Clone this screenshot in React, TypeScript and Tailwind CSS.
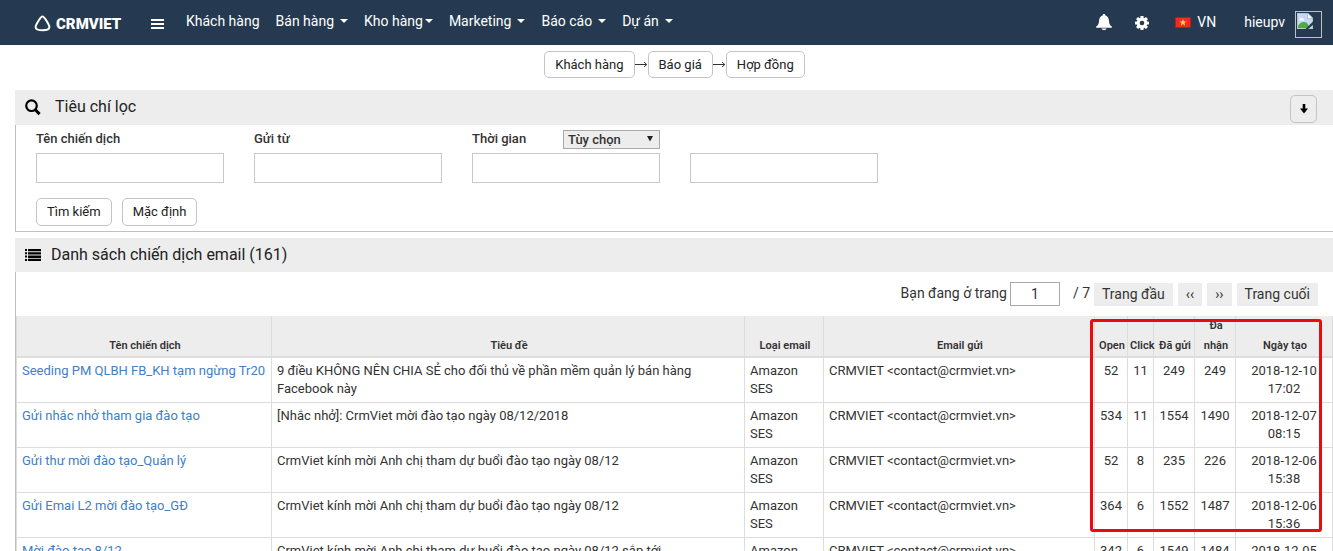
import React from "react";

const menu = [
  { name: "Khách hàng", caret: false },
  { name: "Bán hàng", caret: true },
  { name: "Kho hàng", caret: true, tight: true },
  { name: "Marketing", caret: true },
  { name: "Báo cáo", caret: true },
  { name: "Dự án", caret: true },
];

const steps = ["Khách hàng", "Báo giá", "Hợp đồng"];

const columns = [
  { name: "Tên chiến dịch", width: "w-[255px]" },
  { name: "Tiêu đề", width: "w-auto" },
  { name: "Loại email", width: "w-[79px]" },
  { name: "Email gửi", width: "w-[271px]" },
  { name: "Open", width: "w-[33px]" },
  { name: "Click", width: "w-[26px]" },
  { name: "Đã gửi", width: "w-[41px]" },
  { name: "Đã nhận", width: "w-[41px]" },
  { name: "Ngày tạo", width: "w-[97px]" },
];

const campaigns = [
  {
    name: "Seeding PM QLBH FB_KH tạm ngừng Tr20",
    title:
      "9 điều KHÔNG NÊN CHIA SẺ cho đối thủ về phần mềm quản lý bán hàng Facebook này",
    stats: [52, 11, 249, 249],
    created: "2018-12-10 17:02",
  },
  {
    name: "Gửi nhắc nhở tham gia đào tạo",
    title: "[Nhắc nhở]: CrmViet mời đào tạo ngày 08/12/2018",
    stats: [534, 11, 1554, 1490],
    created: "2018-12-07 08:15",
  },
  {
    name: "Gửi thư mời đào tạo_Quản lý",
    title: "CrmViet kính mời Anh chị tham dự buổi đào tạo ngày 08/12",
    stats: [52, 8, 235, 226],
    created: "2018-12-06 15:38",
  },
  {
    name: "Gửi Emai L2 mời đào tạo_GĐ",
    title: "CrmViet kính mời Anh chị tham dự buổi đào tạo ngày 08/12",
    stats: [364, 6, 1552, 1487],
    created: "2018-12-06 15:36",
  },
  {
    name: "Mời đào tạo 8/12",
    title:
      "CrmViet kính mời Anh chị tham dự buổi đào tạo ngày 08/12 sắp tới",
    stats: [342, 6, 1549, 1484],
    created: "2018-12-05 10:20",
  },
];

const Caret = () => (
  <svg width="8" height="4" viewBox="0 0 8 4" fill="currentColor">
    <path d="M0 0h8L4 4z" />
  </svg>
);

const Logo = () => (
  <a href="#" className="flex items-center gap-[5px] pt-[2px]" aria-label="CRMVIET">
    <svg width="17" height="17" viewBox="0 0 17 17" fill="none">
      <path
        d="M8.5 1.6C10.3 1.6 15.4 9.6 15.4 12.3C15.4 14.6 12 15.2 8.5 15.2C5 15.2 1.6 14.6 1.6 12.3C1.6 9.6 6.7 1.6 8.5 1.6Z"
        stroke="#fff"
        strokeWidth="2"
      />
    </svg>
    <span className="text-[15px] leading-5 font-black">CRMVIET</span>
  </a>
);

const Bell = () => (
  <svg width="16" height="17" viewBox="0 0 16 17" fill="currentColor">
    <path d="M8 0c.9 0 1.4.6 1.4 1.5C11.600 2.200 12.700 4 12.900 6.200C13.100 9.500 13.600 11 15.800 12.600V13.700H.200V12.600C2.400 11 2.900 9.500 3.100 6.200C3.300 4 4.400 2.200 6.600 1.500C6.600.6 7.100 0 8 0zM5.500 14.600h5C10 15.800 9 16.300 8 16.300S6 15.800 5.500 14.600z" />
  </svg>
);

const Gear = () => (
  <svg width="14" height="14" viewBox="0 0 14 14">
    <g fill="currentColor">
      <rect x="5.400" y="0" width="3.200" height="14" rx=".6" />
      <rect x="5.400" y="0" width="3.200" height="14" rx=".6" transform="rotate(45 7 7)" />
      <rect x="5.400" y="0" width="3.200" height="14" rx=".6" transform="rotate(90 7 7)" />
      <rect x="5.400" y="0" width="3.200" height="14" rx=".6" transform="rotate(135 7 7)" />
      <circle cx="7" cy="7" r="5.300" />
    </g>
    <circle cx="7" cy="7" r="2.300" fill="#253a50" />
  </svg>
);

const Flag = () => (
  <svg width="16" height="11" viewBox="0 0 16 11">
    <rect width="16" height="11" fill="#c5161c" />
    <rect x="1" y="1" width="14" height="9" fill="#ee2a2a" />
    <path
      d="M8 2l.9 2.500h2.600L9.400 6.100l.8 2.600L8 7.100 5.800 8.700l.8-2.600L4.500 4.500h2.600z"
      fill="#ffe042"
    />
  </svg>
);

const BrokenImage = () => (
  <svg width="16" height="16" viewBox="0 0 16 16">
    <path d="M0 0h11l5 5v11H0z" fill="#bfc6cc" />
    <path d="M1 1h9.500L15 5.500V15H1z" fill="#c3d9f7" />
    <path d="M10.500 0v5.500H16z" fill="#fff" stroke="#9aa3ab" strokeWidth=".6" />
    <path d="M2.500 6.500c0-2 2.500-2.500 3-1 1.500-.3 2 1 1.500 2H3c-.4 0-.5-.5-.5-1z" fill="#fff" />
    <path d="M1 15v-2c2-4 6-5 9-3l3 5z" fill="#53a93f" />
    <path d="M16 8.500L8.500 16H11l5-4z" fill="#253a50" />
  </svg>
);

const SearchIcon = () => (
  <svg width="16" height="17" viewBox="0 0 16 17" fill="none" stroke="#000">
    <circle cx="6.500" cy="6.700" r="5.300" strokeWidth="2.200" />
    <path d="M10.300 10.800l4.300 4.300" strokeWidth="3" />
  </svg>
);

const ListIcon = () => (
  <svg width="16" height="12" viewBox="0 0 16 12" fill="#000">
    <path d="M0 0h2v2H0zM3 0h13v2.300H3zM0 3.300h2v2H0zM3 3.300h13v2.300H3zM0 6.600h2v2H0zM3 6.600h13v2.300H3zM0 9.900h2v2H0zM3 9.800h13v2.200H3z" />
  </svg>
);

const buttonClass =
  "rounded-[5px] border border-[#c4c4c4] px-[10px] text-[13px] leading-[18px] text-[#222]";
const inputClass = "h-[30px] w-full border border-[#c8c8c8] bg-white px-2 text-[13px]";
const pageClass = "h-[23px] bg-[#ededed] px-2 text-[14px] leading-5";

const Header = () => (
  <header className="flex h-[45px] items-start bg-[#253a50] text-white">
    <div className="flex h-[45px] w-[186px] shrink-0 items-center pl-[34px]">
      <Logo />
      <button aria-label="Menu" className="mt-1 ml-auto mr-[22px]">
        <svg width="13" height="11" viewBox="0 0 13 11" fill="#fff">
          <path d="M0 0h13v2H0zM0 4h13v2H0zM0 8h13v2H0z" />
        </svg>
      </button>
    </div>
    <nav className="flex gap-4 pt-[11px] text-[14px] leading-5">
      {menu.map(({ name, caret, tight }) => (
        <a
          href="#"
          key={name}
          className={`flex items-center ${tight ? "gap-[2px]" : "gap-[6px]"}`}
        >
          {name}
          {caret ? <Caret /> : null}
        </a>
      ))}
    </nav>
    <div className="ml-auto flex h-11 items-center pr-[11px] text-[14px] leading-5">
      <button aria-label="Thông báo">
        <Bell />
      </button>
      <button aria-label="Cài đặt" className="mt-[2px] ml-[23px]">
        <Gear />
      </button>
      <a href="#" className="ml-[26px] flex items-center gap-[6px]">
        <Flag />
        VN
      </a>
      <a href="#" className="ml-7 flex items-center gap-[10px]">
        hieupv
        <span className="mt-1 h-[27px] w-[27px] border border-[#c0c0c0] p-px">
          <BrokenImage />
        </span>
      </a>
    </div>
  </header>
);

const FilterPanel = () => (
  <section className="mt-3 ml-[15px]">
    <div className="flex h-[35px] items-center bg-[#ededed] pr-4 pl-[10px]">
      <SearchIcon />
      <h2 className="ml-[14px] pb-[2px] text-[16px] leading-5 text-[#222]">Tiêu chí lọc</h2>
      <button
        aria-label="Mở rộng"
        className="mt-[2px] ml-auto flex h-7 w-[27px] items-center justify-center rounded-[5px] border border-[#c4c4c4]"
      >
        <svg width="8" height="10" viewBox="0 0 8 10" fill="#000">
          <path d="M2.700 0h2.600v4.500H8L4 9.500 0 4.500h2.700z" />
        </svg>
      </button>
    </div>
    <form className="border-b border-l border-[#c0c0c0] pt-1 pb-[5px] pl-5">
      <div className="grid grid-cols-[repeat(4,188px)] gap-x-[30px] text-[13px] font-medium text-[#333]">
        <div>
          <label htmlFor="name" className="flex h-6 pt-px leading-[18px]">
            Tên chiến dịch
          </label>
          <input id="name" className={inputClass} />
        </div>
        <div>
          <label htmlFor="from" className="flex h-6 pt-px leading-[18px]">
            Gửi từ
          </label>
          <input id="from" className={inputClass} />
        </div>
        <div>
          <div className="flex h-6 items-start justify-between">
            <label htmlFor="time" className="pt-px leading-[18px]">
              Thời gian
            </label>
            <div className="relative mt-px w-[97px]">
              <select
                aria-label="Khoảng thời gian"
                className="block h-[19px] w-full appearance-none border border-[#a9a9a9] bg-[#ededed] pl-1 leading-4"
              >
                <option>Tùy chọn</option>
              </select>
              <svg
                className="pointer-events-none absolute top-[6px] right-[7px]"
                width="6"
                height="6"
                viewBox="0 0 7 7"
                fill="#222"
              >
                <path d="M0 0h7L3.500 6.500z" />
              </svg>
            </div>
          </div>
          <input id="time" className={inputClass} />
        </div>
        <div className="pt-6">
          <input aria-label="Đến ngày" className={inputClass} />
        </div>
      </div>
      <div className="mt-[15px] flex gap-[10px]">
        <button type="button" className={`h-7 ${buttonClass}`}>
          Tìm kiếm
        </button>
        <button type="button" className={`h-7 ${buttonClass}`}>
          Mặc định
        </button>
      </div>
    </form>
  </section>
);

const Pagination = () => (
  <div className="flex h-11 items-center justify-end pr-[15px] pb-[2px] text-[14px] leading-5 text-[#333]">
    <label htmlFor="page">Bạn đang ở trang</label>
    <input
      id="page"
      defaultValue="1"
      className="mt-[2px] mr-[13px] ml-[3px] h-6 w-[50px] border border-[#a9a9a9] text-center text-[14px]"
    />
    <span className="mr-1">/ 7</span>
    <div className="flex gap-[5px] pt-[2px]">
      <button className={pageClass}>Trang đầu</button>
      <button className={pageClass}>‹‹</button>
      <button className={pageClass}>››</button>
      <button className={pageClass}>Trang cuối</button>
    </div>
  </div>
);

const CampaignTable = () => (
  <div className="relative">
    <table className="w-full table-fixed border-separate border-spacing-0 border-l border-[#ddd] text-[13px] leading-[18px] text-[#333]">
      <thead>
        <tr className="h-[42px] bg-[#ededed]">
          {columns.map(({ name, width }) => (
            <th
              key={name}
              className={`${width} h-[42px] border-r border-b-2 border-[#ddd] p-0 pl-[2px] align-bottom text-[11px] leading-5 font-semibold`}
            >
              {name}
            </th>
          ))}
        </tr>
      </thead>
      <tbody>
        {campaigns.map(({ name, title, stats, created }) => (
          <tr key={name} className="h-[45px] align-top">
            <td className="border-r border-b border-[#ddd] px-[5px] py-1 whitespace-nowrap">
              <a href="#" className="text-[#4080c8]">
                {name}
              </a>
            </td>
            <td className="border-r border-b border-[#ddd] px-[5px] py-1">
              <div className="max-w-[430px]">{title}</div>
            </td>
            <td className="border-r border-b border-[#ddd] px-[5px] py-1">Amazon SES</td>
            <td className="border-r border-b border-[#ddd] px-[5px] py-1">
              CRMVIET &lt;contact@crmviet.vn&gt;
            </td>
            {stats.map((value, i) => (
              <td key={i} className="border-r border-b border-[#ddd] py-1 text-center">
                {value}
              </td>
            ))}
            <td className="border-r border-b border-[#ddd] px-[10px] py-1 text-center">
              {created}
            </td>
          </tr>
        ))}
      </tbody>
    </table>
    {/* highlight around the statistics columns */}
    <div className="pointer-events-none absolute top-[3px] right-[11px] h-[213px] w-[232px] rounded-[3px] border-3 border-[#e80c10]" />
  </div>
);

export default function App() {
  return (
    <div className="h-screen overflow-hidden bg-white font-[Roboto,sans-serif]">
      <Header />
      <div className="mt-[6px] flex items-center justify-center pl-4">
        {steps.map((step, i) => (
          <React.Fragment key={step}>
            {i > 0 ? (
              <svg width="13" height="7" viewBox="0 0 13 7" fill="none" stroke="#333">
                <path d="M0 3.500h11.500M9 1l2.800 2.500L9 6" />
              </svg>
            ) : null}
            <button className={`h-[27px] ${buttonClass}`}>{step}</button>
          </React.Fragment>
        ))}
      </div>
      <FilterPanel />
      <section className="mt-[6px] ml-[15px]">
        <div className="flex h-[34px] items-center gap-[10px] bg-[#ededed] pl-[10px]">
          <ListIcon />
          <h2 className="text-[16px] leading-5 text-[#222]">
            Danh sách chiến dịch email (161)
          </h2>
        </div>
        <div className="border-l border-[#c0c0c0]">
          <Pagination />
          <CampaignTable />
        </div>
      </section>
    </div>
  );
}
